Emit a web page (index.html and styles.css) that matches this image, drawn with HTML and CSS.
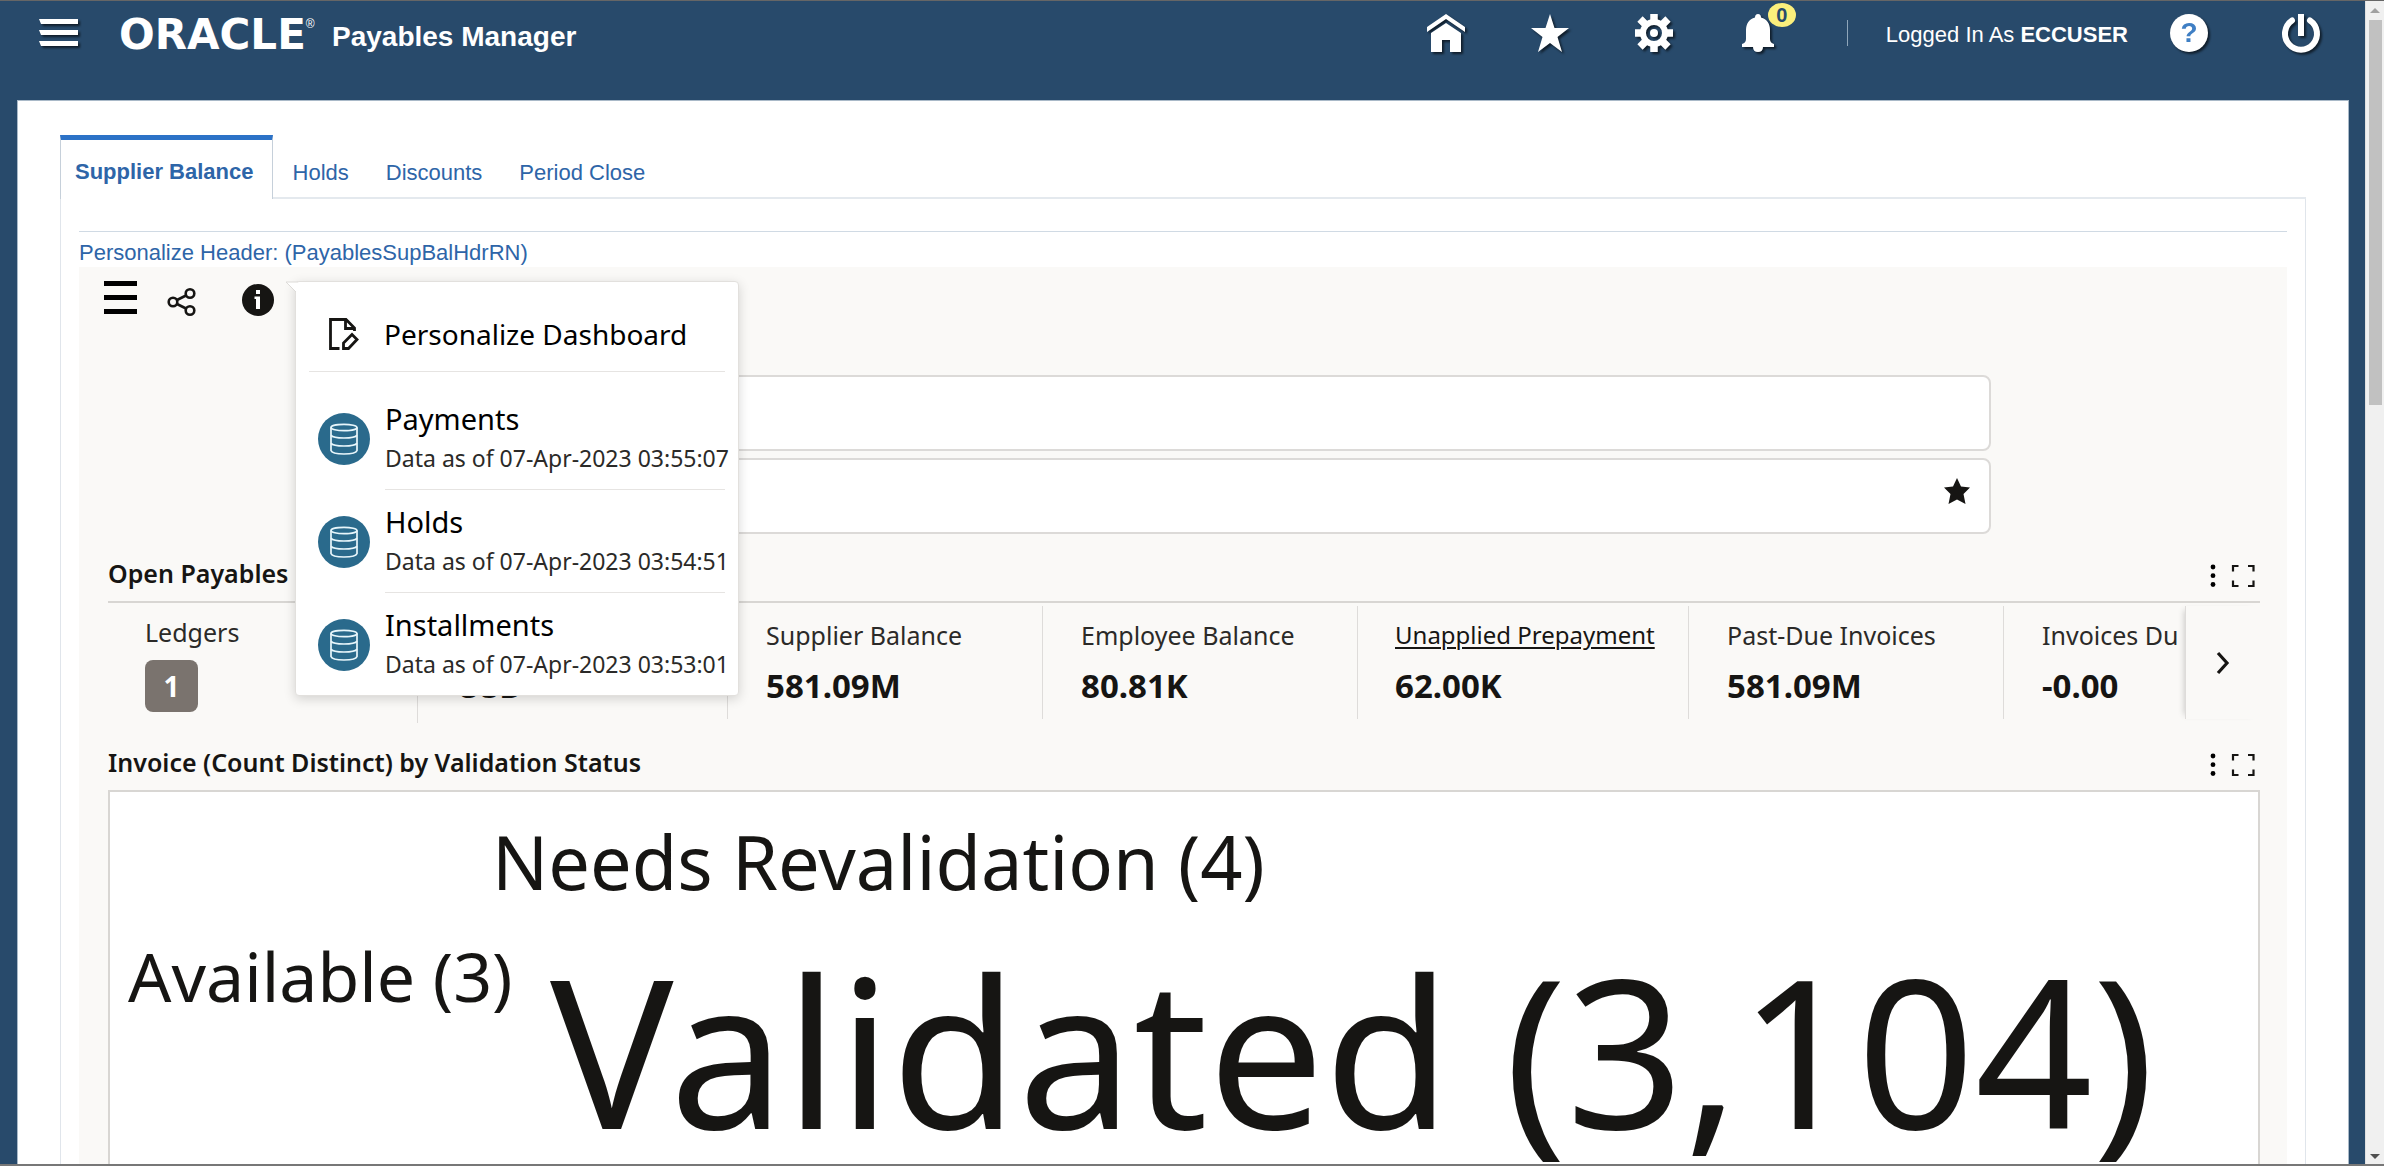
FILE: index.html
```html
<!DOCTYPE html>
<html lang="en">
<head>
<meta charset="utf-8">
<title>Payables Manager</title>
<link rel="stylesheet" href="styles.css">
</head>
<body>
<svg class="sprite" aria-hidden="true">
  <symbol id="i-db" viewBox="0 0 28 32"><g fill="none" stroke="#e8f6fb" stroke-width="1.7"><ellipse cx="14" cy="4.5" rx="13" ry="3.2"/><path d="M1 4.500V27.500Q2 31 14 31T27 27.500V4.500"/><path d="M1 12.200Q3 15 14 15T27 12.200M1 20.200Q3 23 14 23T27 20.200"/></g></symbol>
  <symbol id="i-dots" viewBox="0 0 6 24"><circle cx="3" cy="3" r="2.400"/><circle cx="3" cy="11.700" r="2.400"/><circle cx="3" cy="20.500" r="2.400"/></symbol>
  <symbol id="i-full" viewBox="0 0 24 24"><path d="M2 7.500V2H7.500M17 2h5.500V7.500M22.500 16.500V22H17M7.500 22H2V16.500" fill="none" stroke="#161513" stroke-width="2.200"/></symbol>
</svg>
<div class="window">
  <div class="view">
    <header class="topbar">
      <button class="icon-btn menu-btn" aria-label="Navigator"><svg viewBox="0 0 42 32" width="42" height="32"><path d="M1 1H40V6H3ZM1 12H40V17H3ZM1 23H40V28H3Z" fill="#fff"/></svg></button>
      <div class="brand"><span class="logo">ORACLE</span><sup class="reg">®</sup></div>
      <h1 class="app-title">Payables Manager</h1>
      <nav class="tools">
        <button class="icon-btn" aria-label="Home"><svg viewBox="0 0 38 38" width="38" height="38" fill="#fff"><path d="M19 0 38 13V18L19 5 0 18V13Z"/><path d="M19 9 34 19V38H23V26H15V38H4V19Z"/></svg></button>
        <button class="icon-btn" aria-label="Favorites"><svg viewBox="0 0 38 38" width="38" height="38" fill="#fff"><path d="M19 0 23.500 14H38L26.500 23 31 38 19 29 7 38 11.500 23 0 14H14.500Z"/></svg></button>
        <button class="icon-btn" aria-label="Settings"><svg viewBox="0 0 38 38" width="38" height="38"><g stroke="#fff" stroke-width="7.500"><path d="M19 0V9M19 29V38M0 19H9M29 19H38M5 5 12 12M26 26 33 33M5 33 12 26M26 12 33 5"/></g><circle cx="19" cy="19" r="11" fill="none" stroke="#fff" stroke-width="6"/><circle cx="19" cy="19" r="4" fill="#fff"/></svg></button>
        <button class="icon-btn bell" aria-label="Notifications"><svg viewBox="0 0 38 38" width="38" height="38" fill="#fff"><path d="M19 0Q22 0 22 3.500C28 5 31 10 31 16V25Q31 29 35 30V33H24Q24 38 19 38T14 33H3V30Q7 29 7 25V16C7 10 10 5 16 3.500Q16 0 19 0Z"/></svg><span class="badge">0</span></button>
        <span class="sep"></span>
        <span class="user">Logged In As <b>ECCUSER</b></span>
        <button class="icon-btn help" aria-label="Help"><span class="q">?</span></button>
        <button class="icon-btn power" aria-label="Log out"><svg viewBox="0 0 38 38" width="38" height="38" fill="none" stroke="#fff"><path d="M10 6.500A16 16 0 1 0 28 6.500" stroke-width="6" stroke-linecap="round"/><path d="M19 0V22" stroke-width="6"/></svg></button>
      </nav>
    </header>

    <main class="page">
      <nav class="tabs">
        <a class="tab active" href="#balance">Supplier Balance</a>
        <a class="tab" href="#holds">Holds</a>
        <a class="tab" href="#discounts">Discounts</a>
        <a class="tab" href="#close">Period Close</a>
      </nav>
      <section class="tab-body">
        <a class="personalize" href="#header">Personalize Header: (PayablesSupBalHdrRN)</a>
        <div class="dash">
          <div class="dash-tools">
            <button class="icon-btn" aria-label="Menu"><svg width="33" height="34" viewBox="0 0 33 34"><path d="M0 0H33V5H0ZM0 14H33V19H0ZM0 28H33V33H0Z" fill="#000"/></svg></button>
            <button class="icon-btn share" aria-label="Share"><svg width="30" height="30" viewBox="0 0 30 30" fill="none" stroke="#161513" stroke-width="2.600"><circle cx="6" cy="15" r="4.300"/><circle cx="23" cy="6.500" r="4.300"/><circle cx="23" cy="23.500" r="4.300"/><path d="M10 13 19 8.500M10 17 19 21.500"/></svg></button>
            <button class="icon-btn info" aria-label="Information"><svg width="32" height="32" viewBox="0 0 32 32"><circle cx="16" cy="16" r="16" fill="#161513"/><path d="M14 6h4v4h-4ZM12.500 12.500H18V25H14V15H12.500Z" fill="#fff"/></svg></button>
            <div class="popover">
              <svg class="pointer" width="14" height="12" viewBox="0 0 14 12"><path d="M14 1H2L12 11" fill="#fff" stroke="#dddbd8"/></svg>
              <button class="pop-action"><svg width="30" height="32" viewBox="0 0 30 32" fill="none" stroke="#161513" stroke-width="2.800"><path d="M10.500 30.500H1.500V1.500H17L25.500 10V13M16.500 1.500V10.500H25.500M14.500 30.500V25L23 16.500 28 21.500 19.500 30.500Z"/></svg>Personalize Dashboard</button>
              <ul class="sets">
                <li><span class="disc"><svg width="28" height="32"><use href="#i-db"/></svg></span><div class="set"><strong>Payments</strong><small>Data as of 07-Apr-2023 03:55:07</small></div></li>
                <li><span class="disc"><svg width="28" height="32"><use href="#i-db"/></svg></span><div class="set"><strong>Holds</strong><small>Data as of 07-Apr-2023 03:54:51</small></div></li>
                <li><span class="disc"><svg width="28" height="32"><use href="#i-db"/></svg></span><div class="set"><strong>Installments</strong><small>Data as of 07-Apr-2023 03:53:01</small></div></li>
              </ul>
            </div>
          </div>

          <div class="search">
            <input class="field" type="text" aria-label="Search">
            <div class="field saved"><button class="icon-btn" aria-label="Saved searches"><svg width="26" height="26" viewBox="0 0 26 26" fill="#161513"><path d="M13 0 17 8.500 26 9.500 19.500 16 21.500 26 13 21.500 4.500 26 6.500 16 0 9.500 9 8.500Z"/></svg></button></div>
          </div>

          <section class="widget">
            <div class="widget-head ruled"><h2>Open Payables</h2><button class="icon-btn" aria-label="Options"><svg width="6" height="24"><use href="#i-dots"/></svg></button><button class="icon-btn" aria-label="Maximize"><svg width="24" height="24"><use href="#i-full"/></svg></button></div>
            <div class="kpis">
              <div class="kpi ledgers"><span class="label">Ledgers</span><span class="count">1</span></div>
              <div class="strip">
                <div class="kpi cur"><span class="value">USD</span></div>
                <div class="kpi"><span class="label">Supplier Balance</span><span class="value">581.09M</span></div>
                <div class="kpi"><span class="label">Employee Balance</span><span class="value">80.81K</span></div>
                <div class="kpi wide"><a class="label" href="#prepay">Unapplied Prepayment</a><span class="value">62.00K</span></div>
                <div class="kpi"><span class="label">Past-Due Invoices</span><span class="value">581.09M</span></div>
                <div class="kpi"><span class="label">Invoices Due</span><span class="value">-0.00</span></div>
              </div>
              <button class="icon-btn next" aria-label="Next"><svg width="14" height="24" viewBox="0 0 14 24" fill="none" stroke="#161513" stroke-width="3.200"><path d="M2 2 11 12 2 22"/></svg></button>
            </div>
          </section>

          <section class="widget">
            <div class="widget-head"><h2>Invoice (Count Distinct) by Validation Status</h2><button class="icon-btn" aria-label="Options"><svg width="6" height="24"><use href="#i-dots"/></svg></button><button class="icon-btn" aria-label="Maximize"><svg width="24" height="24"><use href="#i-full"/></svg></button></div>
            <div class="cloud">
              <span class="word needs">Needs Revalidation (4)</span>
              <span class="word avail">Available (3)</span>
              <span class="word valid">Validated (3,104)</span>
            </div>
          </section>
        </div>
      </section>
    </main>
  </div>
  <div class="scrollbar"><span class="arrow up"></span><span class="thumb"></span><span class="arrow down"></span></div>
</div>
</body>
</html>
```
FILE: styles.css
```css
* { box-sizing: border-box; }
body { margin: 0; background: #284a6b; font-family: "Liberation Sans", Arial, sans-serif; color: #161513; }
h1, h2, ul { margin: 0; padding: 0; }
.sprite { position: absolute; width: 0; height: 0; }
.icon-btn { display: flex; align-items: center; justify-content: center; flex: none; margin: 0; padding: 0; border: 0; background: none; }
.icon-btn svg { display: block; overflow: visible; }
.window { display: flex; height: 100vh; overflow: hidden; border-top: 1px solid #666; border-bottom: 2px solid #777; }
.view { flex: 1; min-width: 0; }

/* top bar */
.topbar { display: flex; align-items: flex-start; height: 99px; padding: 13px 45px 0 38px; color: #fff; }
.topbar svg, .help { filter: drop-shadow(2px 2px 1px rgba(0, 0, 0, .6)); }
.menu-btn { margin-top: 4px; width: 42px; }
.brand { display: flex; width: 213px; margin-left: 39px; }
.logo { font: bold 42px/42px "DejaVu Sans", sans-serif; }
.reg { font-size: 12px; line-height: 20px; }
.app-title { font-size: 28px; line-height: 46px; white-space: nowrap; }
.tools { display: flex; align-items: center; margin-left: auto; }
.tools .icon-btn { width: 38px; height: 38px; margin-right: 66px; }
.tools .bell { position: relative; margin-right: 70px; }
.badge { position: absolute; left: 29px; top: -11px; width: 28px; height: 24px; border-radius: 50%; background: #fbef7c; color: #284a6b; font: bold 20px/24px "Liberation Sans", Arial, sans-serif; text-align: center; }
.sep { width: 1px; height: 26px; margin-right: 38px; background: #8fa6ba; }
.user { margin-right: 42px; padding-top: 3px; font-size: 22px; line-height: 35px; white-space: nowrap; }
.tools .help { margin-right: 74px; border-radius: 50%; background: #fff; }
.q { color: #3f7fc4; font: bold 28px/38px "Liberation Sans", Arial, sans-serif; }
.tools .power { margin-right: 0; }

/* page and tabs */
.page { min-height: 100vh; margin: 0 16px 0 17px; padding: 34px 42px 0; border: 1px solid #a9b9c8; border-bottom: 0; background: #fff; }
.tabs { display: flex; border-bottom: 2px solid #e4e9ee; }
.tab { padding: 22px 17px 0 20px; font-size: 22px; line-height: 32px; color: #2e65a8; text-decoration: none; white-space: nowrap; }
.tab.active { height: 64px; margin-bottom: -2px; padding: 16px 18px 0 14px; border: 1px solid #c6d0da; border-top: 5px solid #2c72c7; border-bottom: 0; background: #fff; font-weight: bold; }
.tab-body { padding: 32px 18px 0; border: 1px solid #e0e5eb; border-top: 0; }
.personalize { display: block; height: 36px; border-top: 1px solid #d0dae4; color: #2e65a8; font-size: 22px; line-height: 42px; text-decoration: none; white-space: nowrap; }

/* dashboard */
.dash { min-height: 100vh; padding: 0 27px 0 29px; background: #faf9f7; font-family: "Noto Sans", sans-serif; }
.dash-tools { position: relative; display: flex; align-items: center; height: 62px; margin-left: -4px; }
.share { margin: 8px 0 0 30px; }
.info { margin: 3px 0 0 45px; }
.popover { position: absolute; z-index: 2; left: 191px; top: 14px; width: 444px; height: 415px; padding: 0 13px; border: 1px solid #e2e0dd; border-radius: 4px; background: #fff; box-shadow: 0 3px 12px rgba(0, 0, 0, .16); }
.pointer { position: absolute; left: -12px; top: -1px; }
.pop-action { display: flex; align-items: center; gap: 25px; width: 100%; height: 90px; padding: 14px 20px 0; border: 0; border-bottom: 1px solid #e6e4e2; background: none; color: #000; font: 28px/40px "Noto Sans", sans-serif; white-space: nowrap; }
.sets { padding-top: 15px; list-style: none; }
.sets li { display: flex; align-items: center; gap: 15px; height: 103px; padding-left: 9px; }
.disc { display: flex; align-items: center; justify-content: center; flex: none; width: 52px; height: 52px; border-radius: 50%; background: #2a6a8c; }
.set { display: flex; flex: 1; flex-direction: column; min-width: 0; height: 103px; padding-top: 10px; border-bottom: 1px solid #e6e4e2; white-space: nowrap; }
.sets li:last-child .set { border-bottom: 0; }
.set strong { color: #000; font-size: 29px; font-weight: 400; line-height: 44px; }
.set small { color: #2b2a28; font-size: 23px; line-height: 34px; }
.search { display: flex; flex-direction: column; gap: 7px; margin: 46px 269px 0 189px; }
.field { width: 100%; height: 76px; border: 2px solid #dcdad8; border-radius: 8px; background: #fff; }
.saved { display: flex; justify-content: flex-end; padding: 18px 19px 0; }
.saved .icon-btn { height: 26px; }
.widget-head { display: flex; align-items: center; gap: 15px; height: 67px; padding: 17px 5px 0 0; }
.widget-head h2 { flex: 1; padding-bottom: 6px; font-size: 25px; font-weight: 600; line-height: 34px; white-space: nowrap; }
.ruled { height: 69px; border-bottom: 2px solid #d8d6d3; }
.kpis { display: flex; height: 120px; }
.kpi { display: flex; flex: none; flex-direction: column; width: 315px; height: 113px; margin-top: 3px; padding: 11px 0 0 38px; border-left: 1px solid #dedcda; white-space: nowrap; }
.kpi.ledgers { width: 309px; padding: 8px 0 0 37px; border-left: 0; }
.kpi.cur { width: 310px; height: 117px; }
.kpi.wide { width: 331px; padding-left: 37px; }
.strip { display: flex; flex: 1; min-width: 0; overflow: hidden; }
.label { color: #2b2a28; font-size: 25px; line-height: 36px; }
a.label { color: #161513; font-size: 24px; line-height: 35px; text-decoration-thickness: 2px; text-underline-offset: 3px; }
.value { margin-top: 11px; font-size: 33px; font-weight: 700; line-height: 44px; }
a + .value { margin-top: 12px; }
.cur .value { margin-top: 47px; }
.count { width: 53px; height: 52px; margin-top: 10px; border-radius: 8px; background: #7a736e; color: #fff; font-size: 28px; font-weight: 700; line-height: 52px; text-align: center; }
.next { width: 75px; height: 113px; margin: 3px 0 0 6px; border-left: 1px solid #dedcda; box-shadow: -5px 0 6px -4px rgba(0, 0, 0, .18); }
.cloud { position: relative; height: 800px; border: 2px solid #d8d6d3; background: #fff; }
.word { position: absolute; white-space: nowrap; line-height: 1; }
.needs { left: 382px; top: 33px; font-size: 74px; }
.avail { left: 18px; top: 150px; font-size: 68px; }
.valid { left: 440px; top: 154px; font-size: 206px; }

/* window scrollbar */
.scrollbar { display: flex; flex-direction: column; align-items: center; width: 19px; border-left: 1px solid #e0e0e0; background: #f0f0f0; }
.thumb { width: 13px; height: 385px; background: #c1c1c1; }
.arrow { flex: none; border: 5px solid transparent; }
.up { margin: 2px 0 7px; border-bottom-color: #a0a0a0; }
.down { margin-top: auto; border-top-color: #505050; }
```
